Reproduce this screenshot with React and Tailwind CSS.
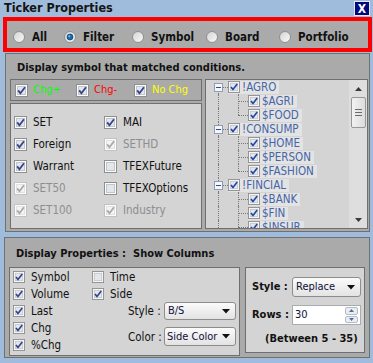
import { useId } from "react";

const FONT = "font-['DejaVu_Sans_Condensed','Liberation_Sans',sans-serif]";

function CheckBox({ checked = true, disabled = false, size = 13, mark }) {
  const border = disabled ? "#c2c2c2" : "#8e8f8f";
  const inner = disabled ? "#f4f4f4" : "#e3e6ea";
  const tick = mark || (disabled ? "#a9a9a9" : "#33458a");
  return (
    <svg width={size} height={size} viewBox="0 0 13 13" className="shrink-0">
      <rect x="0.5" y="0.5" width="12" height="12" fill="#fcfcfc" stroke={border} />
      <rect x="2.5" y="2.5" width="8" height="8" fill={inner} stroke={disabled ? "#e2e2e2" : "#c2c6cc"} />
      {checked && (
        <path d="M3.2 6.4 L5.4 9.2 L10 3.2" fill="none" stroke={tick} strokeWidth="1.8" />
      )}
    </svg>
  );
}

function Radio({ on }) {
  const id = useId();
  return (
    <svg width="12" height="12" viewBox="0 0 12 12" className="shrink-0">
      <defs>
        <linearGradient id={id} x1="0" y1="0" x2="1" y2="1">
          <stop offset="0" stopColor="#d2d2d2" />
          <stop offset="1" stopColor="#fbfbfb" />
        </linearGradient>
      </defs>
      <circle cx="6" cy="6" r="5.5" fill={`url(#${id})`} stroke="#8c8e90" />
      {on && <circle cx="6" cy="6" r="3" fill="#1c6aa8" stroke="#0b3f6e" strokeWidth="0.7" />}
      {on && <circle cx="5.2" cy="5.2" r="1" fill="#7fc0ee" />}
    </svg>
  );
}

function Arrow() {
  return (
    <svg width="8" height="5" viewBox="0 0 8 5" className="shrink-0">
      <path d="M0 0 H8 L4 4.5 Z" fill="#111" />
    </svg>
  );
}

const radios = [
  { label: "All", w: "w-[51px]" },
  { label: "Filter", w: "w-[68px]" },
  { label: "Symbol", w: "w-[74px]" },
  { label: "Board", w: "w-[73px]" },
  { label: "Portfolio", w: "w-[70px]" },
];

const filterLeft = [
  { label: "SET", checked: true },
  { label: "Foreign", checked: true },
  { label: "Warrant", checked: true },
  { label: "SET50", checked: true, disabled: true },
  { label: "SET100", checked: true, disabled: true },
];

const filterRight = [
  { label: "MAI", checked: true },
  { label: "SETHD", checked: true, disabled: true },
  { label: "TFEXFuture", checked: false },
  { label: "TFEXOptions", checked: false },
  { label: "Industry", checked: true, disabled: true },
];

const tree = [
  { label: "!AGRO", children: ["$AGRI", "$FOOD"] },
  { label: "!CONSUMP", children: ["$HOME", "$PERSON", "$FASHION"] },
  { label: "!FINCIAL", children: ["$BANK", "$FIN", "$INSUR"] },
];

const DOT = "border-dotted border-[#7a7a7a]";

function TreeLabel({ text }) {
  return (
    <div className="flex h-[13px] items-center gap-[2px] bg-[#e3e3e3] pr-[3px]">
      <CheckBox size={12} mark="#2346a8" />
      <span className="text-[11.5px] leading-[13px] text-[#4565a8]">{text}</span>
    </div>
  );
}

function TreeView() {
  return (
    <div className="flex h-[150px] w-[163px] border border-[#6f6f6f] bg-[#d4d4d4]">
      <div className="h-full flex-1 overflow-hidden">
        {tree.map((group, gi) => (
          <div key={group.label}>
            <div className="flex h-[14px] items-center">
              <div className="relative h-full w-[22px] shrink-0">
                {gi > 0 && <span className={`absolute left-[12px] top-0 h-[3px] border-l ${DOT}`} />}
                <span className={`absolute left-[12px] top-[11px] bottom-0 border-l ${DOT}`} />
                <span className={`absolute left-[17px] top-[7px] w-[5px] border-t ${DOT}`} />
                <span className="absolute left-[8px] top-[3px] flex h-[9px] w-[9px] items-center justify-center border border-[#8f9db8] bg-[#f6f6f6]">
                  <span className="h-px w-[5px] bg-[#2e4f96]" />
                </span>
              </div>
              <TreeLabel text={group.label} />
            </div>
            {group.children.map((child, ci) => (
              <div key={child} className="flex h-[14px] items-center">
                <div className="relative h-full w-[22px] shrink-0">
                  <span className={`absolute left-[12px] top-0 bottom-0 border-l ${DOT}`} />
                </div>
                <div className="relative h-full w-[20px] shrink-0">
                  {ci < group.children.length - 1 ? (
                    <span className={`absolute left-[10px] top-0 bottom-0 border-l ${DOT}`} />
                  ) : (
                    <span className={`absolute left-[10px] top-0 h-[7px] border-l ${DOT}`} />
                  )}
                  <span className={`absolute left-[10px] top-[7px] w-[10px] border-t ${DOT}`} />
                </div>
                <TreeLabel text={child} />
              </div>
            ))}
          </div>
        ))}
      </div>
      {/* scrollbar */}
      <div className="flex h-full w-[18px] shrink-0 flex-col items-center bg-[#dedede]">
        <div className="flex h-[17px] w-full items-center justify-center">
          <svg width="7" height="4" viewBox="0 0 7 4">
            <path d="M0 4 L3.5 0 L7 4 Z" fill="#3a3a3a" />
          </svg>
        </div>
        <div className="flex h-[31px] w-[15px] flex-col items-center justify-center gap-[2px] rounded-[2px] border border-[#979797] bg-gradient-to-r from-[#f2f2f2] to-[#dcdcdc]">
          <span className="h-px w-[7px] bg-[#6a6a6a]" />
          <span className="h-px w-[7px] bg-[#6a6a6a]" />
          <span className="h-px w-[7px] bg-[#6a6a6a]" />
        </div>
        <div className="flex-1" />
        <div className="flex h-[17px] w-full items-center justify-center">
          <svg width="7" height="4" viewBox="0 0 7 4">
            <path d="M0 0 H7 L3.5 4 Z" fill="#3a3a3a" />
          </svg>
        </div>
      </div>
    </div>
  );
}

function FilterItem({ item }) {
  return (
    <div className="flex h-[22px] items-center gap-[6px]">
      <CheckBox checked={item.checked} disabled={item.disabled} />
      <span className={item.disabled ? "text-[#8e8e8e]" : "text-[#111]"}>{item.label}</span>
    </div>
  );
}

function SmallCheck({ label, checked = true }) {
  return (
    <div className="flex h-[17px] items-center gap-[6px]">
      <CheckBox size={12} checked={checked} />
      <span className="text-[#111]">{label}</span>
    </div>
  );
}

export default function App() {
  return (
    <div className={`h-[363px] w-[373px] overflow-hidden whitespace-nowrap bg-[#a0bcdc] text-[11px] leading-[14px] ${FONT}`}>
      {/* Title bar */}
      <div className="flex h-[17px] items-start justify-between pl-[4px] pr-[3px]">
        <span className="pt-[1px] text-[12.5px] font-bold text-[#141414]">Ticker Properties</span>
        <div className="mt-[1px] flex h-[15px] w-[16px] items-center justify-center border border-[#e4e8f0] bg-[#00087e] text-[12px] font-bold leading-none text-white">
          X
        </div>
      </div>

      {/* Source selector */}
      <div className="ml-[3px] h-[35px] w-[369px] border-4 border-[#ff0000] bg-[#aaaaaa] pt-[9px]">
        <div className="flex h-[14px] items-center pl-[6px]">
          {radios.map((r, i) => (
            <div key={r.label} className={`flex items-center gap-[7px] ${r.w}`}>
              <Radio on={i === 1} />
              <span className="text-[11.5px] font-bold text-[#111]">{r.label}</span>
            </div>
          ))}
        </div>
      </div>

      {/* Filter panel */}
      <div className="ml-[5px] mt-px h-[179px] w-[365px] border border-[#707070] bg-[#aaaaaa] pl-[4px]">
        <div className="h-[25px] pl-[7px] pt-[7px] font-bold text-[#111]">
          Display symbol that matched conditions.
        </div>
        <div className="flex gap-[3px]">
          <div className="flex w-[192px] flex-col gap-[2px]">
            <div className="flex h-[22px] items-center border border-[#6f6f6f] pl-[4px]">
              <div className="flex w-[61px] items-center gap-[5px]">
                <CheckBox />
                <span className="text-[#00ff00]">Chg+</span>
              </div>
              <div className="flex w-[58px] items-center gap-[5px]">
                <CheckBox />
                <span className="text-[#ff0000]">Chg-</span>
              </div>
              <div className="flex items-center gap-[5px]">
                <CheckBox />
                <span className="text-[#ffff00]">No Chg</span>
              </div>
            </div>
            <div className="flex h-[126px] border border-[#6f6f6f] bg-[#d4d4d4] pl-[3px] pt-[7px] text-[11.5px]">
              <div className="w-[90px]">
                {filterLeft.map((it) => (
                  <FilterItem key={it.label} item={it} />
                ))}
              </div>
              <div>
                {filterRight.map((it) => (
                  <FilterItem key={it.label} item={it} />
                ))}
              </div>
            </div>
          </div>
          <TreeView />
        </div>
      </div>

      {/* Display properties panel */}
      <div className="ml-[4px] mt-[5px] h-[121px] w-[366px] border border-[#707070] bg-[#aaaaaa] pl-[4px]">
        <div className="flex h-[29px] pl-[7px] pt-[9px] font-bold text-[#111]">
          <span className="w-[117px]">Display Properties :</span>
          <span>Show Columns</span>
        </div>
        <div className="flex items-start gap-[5px]">
          <div className="flex h-[89px] w-[231px] border border-[#6f6f6f] bg-[#d4d4d4] text-[11.5px]">
            <div className="w-[82px] pl-[3px]">
              <SmallCheck label="Symbol" />
              <SmallCheck label="Volume" />
              <SmallCheck label="Last" />
              <SmallCheck label="Chg" />
              <SmallCheck label="%Chg" />
            </div>
            <div className="flex-1">
              <SmallCheck label="Time" checked={false} />
              <SmallCheck label="Side" />
              <div className="flex h-[18px] items-center">
                <span className="w-[36px]" />
                <span className="w-[36px] text-[#111]">Style :</span>
                <div className="flex h-[18px] w-[72px] items-center justify-between rounded-[3px] border border-[#8d8d8d] bg-gradient-to-b from-[#fbfbfb] to-[#e3e3e3] pl-[3px] pr-[5px] text-[11px] text-[#10103a]">
                  <span>B/S</span>
                  <Arrow />
                </div>
              </div>
              <div className="mt-[7px] flex h-[19px] items-center">
                <span className="w-[36px]" />
                <span className="w-[36px] text-[#111]">Color :</span>
                <div className="flex h-[19px] w-[72px] items-center justify-between rounded-[3px] border border-[#8d8d8d] bg-gradient-to-b from-[#fbfbfb] to-[#e3e3e3] pl-[2px] pr-[5px] text-[11px] text-[#10103a]">
                  <span>Side Color</span>
                  <Arrow />
                </div>
              </div>
            </div>
          </div>
          <div className="h-[86px] w-[120px] border border-[#6f6f6f] bg-[#d4d4d4] pl-[6px] pt-[9px]">
            <div className="flex h-[20px] items-center">
              <span className="w-[40px] font-bold text-[#111]">Style :</span>
              <div className="flex h-[20px] w-[69px] items-center justify-between rounded-[3px] border border-[#8d8d8d] bg-gradient-to-b from-[#fbfbfb] to-[#e3e3e3] pl-[3px] pr-[5px] text-[#10103a]">
                <span>Replace</span>
                <Arrow />
              </div>
            </div>
            <div className="mt-[8px] flex h-[20px] items-center">
              <span className="w-[40px] font-bold text-[#111]">Rows :</span>
              <div className="flex h-[20px] w-[69px] items-center justify-between border border-[#a9abb0] bg-white pl-[2px] pr-[2px] text-[#10103a]">
                <span>30</span>
                <div className="flex h-[16px] w-[13px] flex-col gap-px">
                  <div className="flex flex-1 items-center justify-center rounded-[2px] border border-[#b5bcc7] bg-[#e9edf2]">
                    <svg width="5" height="3" viewBox="0 0 5 3">
                      <path d="M0 3 L2.5 0 L5 3 Z" fill="#4d6d9a" />
                    </svg>
                  </div>
                  <div className="flex flex-1 items-center justify-center rounded-[2px] border border-[#b5bcc7] bg-[#e9edf2]">
                    <svg width="5" height="3" viewBox="0 0 5 3">
                      <path d="M0 0 H5 L2.5 3 Z" fill="#4d6d9a" />
                    </svg>
                  </div>
                </div>
              </div>
            </div>
            <div className="mt-[7px] pl-[13px] font-bold text-[#111]">(Between 5 - 35)</div>
          </div>
        </div>
      </div>
    </div>
  );
}
